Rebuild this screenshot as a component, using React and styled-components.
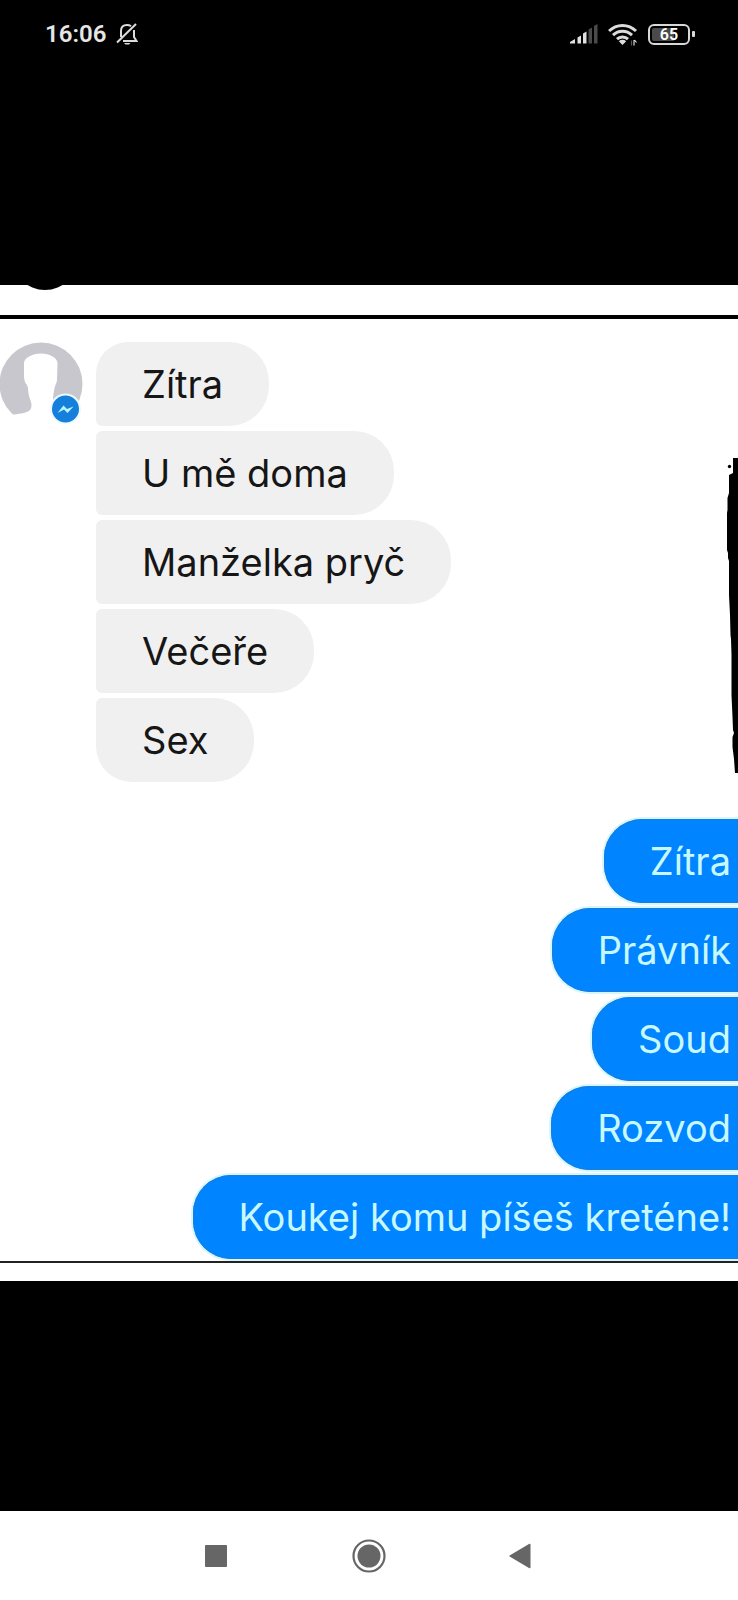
import styled, { createGlobalStyle } from "styled-components"

const GlobalStyle = createGlobalStyle`
    * {
        box-sizing: border-box;
    }

    body {
        margin: 0;
        background: #000;
    }
`
const Screen = styled.div`
    min-height: 100vh;
    display: flex;
    flex-direction: column;
    background: #000;
    overflow-x: hidden;
`
const StatusBar = styled.header`
    display: flex;
    align-items: center;
    justify-content: space-between;
    height: 55px;
    padding: 13px 43px 0 45px;
    color: #e6e6e6;
    font-family: Roboto, sans-serif;
`
const StatusGroup = styled.div`
    display: flex;
    align-items: center;
    gap: 10px;
`
const Clock = styled.time`
    font-size: 24px;
    line-height: 28px;
    font-weight: 600;
`
const Battery = styled.div`
    display: flex;
    align-items: center;
    gap: 2px;

    &::after {
        content: "";
        width: 3px;
        height: 6px;
        border-radius: 1px;
        background: #d8d8d8;
    }
`
const BatteryBody = styled.div`
    width: 42px;
    height: 21px;
    padding: 2px;
    border: 2px solid #d8d8d8;
    border-radius: 6px;
`
const BatteryLevel = styled.div`
    height: 100%;
    border-radius: 2px;
    background: linear-gradient(to right, #4a4a4a ${props => props.$level}%, transparent ${props => props.$level}%);
    color: #fff;
    font-size: 16px;
    line-height: 14px;
    font-weight: 600;
    text-align: center;
`
const Stage = styled.main`
    flex: 1;
    display: flex;
    flex-direction: column;
    justify-content: center;
`
const Photo = styled.section`
    position: relative;
    background: #fff;
    overflow: hidden;
`
const PhotoTop = styled.div`
    height: 34px;
    padding-left: 26px;
    border-bottom: 4px solid #000;

    & svg {
        display: block;
    }
`
const PhotoBottom = styled.div`
    height: 20px;
    border-top: 2px solid #222;
`
const Chat = styled.div`
    display: flex;
    flex-direction: column;
    gap: 37px;
    padding: 23px 0 2px;
`
const Incoming = styled.div`
    display: flex;
    align-items: flex-start;
    gap: 12px;

    & > svg {
        flex: none;
    }
`
const Messages = styled.ul`
    display: flex;
    flex-direction: column;
    align-items: ${props => props.$own ? "flex-end" : "flex-start"};
    gap: 5px;
    margin: 0;
    padding: 0;
    list-style: none;
`
const Bubble = styled.li`
    height: 84px;
    padding: 0 46px;
    border-radius: 6px 40px 40px 6px;
    background: #f1f0f0;
    color: #161616;
    font-family: Inter, "Liberation Sans", sans-serif;
    font-size: 38px;
    line-height: 84px;
    font-weight: 400;
    white-space: nowrap;

    &:first-child {
        border-top-left-radius: 32px;
    }

    &:last-child {
        border-bottom-left-radius: 36px;
    }
`
const OwnBubble = styled(Bubble)`
    padding-right: 7px;
    background: #0084ff;
    color: #c8f8ff;
    box-shadow: inset 0 0 0 1px #1c7cd6, 0 0 0 2px #d4f6ff;

    &, &:first-child, &:last-child {
        border-radius: 38px 0 0 38px;
    }
`
const Scribble = styled.svg`
    position: absolute;
    top: 170px;
    right: 0;
`
const NavBar = styled.nav`
    display: grid;
    grid-template-columns: repeat(3, 1fr);
    height: 89px;
    padding: 0 19%;
    background: #fff;
`
const NavButton = styled.button`
    display: flex;
    align-items: center;
    justify-content: center;
    padding: 0;
    border: none;
    background: transparent;
    color: #666;
`

const incoming = ["Zítra", "U mě doma", "Manželka pryč", "Večeře", "Sex"]
const outgoing = ["Zítra", "Právník", "Soud", "Rozvod", "Koukej komu píšeš kreténe!"]

const BellOff = () => (
    <svg width="22" height="22" viewBox="0 0 22 22" fill="none" stroke="#dcdcdc" strokeWidth="2">
        <path d="M5 14V8C5 4 7.500 2 11 2C12.500 2 14 2.400 15 3.200" />
        <path d="M18 7V14L20.500 18H7" />
        <path d="M1 19.500L20 1" />
        <path d="M8 20H14.500L13 21.500H9.500Z" fill="#dcdcdc" stroke="none" />
    </svg>
)

const Signal = () => (
    <svg width="28" height="20" viewBox="0 0 28 20">
        <path d="M0 19.500V18L5 15V19.500Z" fill="#e0e0e0" />
        <path d="M7.500 13.500L11 11.500V19.500H7.500Z" fill="#e0e0e0" />
        <path d="M13 9.500L16.500 7.500V19.500H13Z" fill="#e0e0e0" />
        <path d="M18.500 5.500L22 3.500V19.500H18.500Z" fill="#4a4a4a" />
        <path d="M24 2L27.500 0V19.500H24Z" fill="#4a4a4a" />
    </svg>
)

const Wifi = () => (
    <svg width="30" height="23" viewBox="0 0 30 23" fill="none" stroke="#dcdcdc" strokeWidth="3">
        <path d="M1 8C8.500 0.500 20.500 0.500 28 8" />
        <path d="M5 12.200C10.500 7 18.500 7 24 12.200" />
        <path d="M9 16.200C12 13.300 17 13.300 20 16.200" />
        <path d="M10.800 18.200C13 16.400 16 16.400 18.200 18.200L14.500 22Z" fill="#dcdcdc" stroke="none" />
        <path d="M26 17V22.500M26.500 17L28.500 19.500" strokeWidth="1.200" />
        <path d="M23.500 22.500V17.500" stroke="#555" strokeWidth="1.200" />
    </svg>
)

const Avatar = () => (
    <svg width="84" height="84" viewBox="0 0 84 84">
        <circle cx="41" cy="42" r="41.500" fill="#c8c7cd" />
        <path
            d="M24 21C24 16 32 11.500 41 11.500C50 11.500 57.500 16 57.500 21L57 38C57 41 55 43 54.500 46C54 50 53 53 53 57C53 62 60 65 84 68V84H0V76L14 72.500C21 71.500 27 71 30 68C33 64 31 60 29 54C28 50 28.500 46 27 43C25 41 24 38 24 34Z"
            fill="#fff"
        />
        <circle cx="65.500" cy="67" r="15.500" fill="#eefaff" />
        <circle cx="65.500" cy="67" r="13.500" fill="#1480dc" />
        <path d="M57.500 71L63.500 63.500L67 67L73.500 64.500L67.500 71L64 67.500Z" fill="#b8f5ff" />
    </svg>
)

const App = () => {
    return (
        <Screen>
            <GlobalStyle />
            <StatusBar>
                <StatusGroup>
                    <Clock>16:06</Clock>
                    <BellOff />
                </StatusGroup>
                <StatusGroup>
                    <Signal />
                    <Wifi />
                    <Battery>
                        <BatteryBody>
                            <BatteryLevel $level={65}>65</BatteryLevel>
                        </BatteryBody>
                    </Battery>
                </StatusGroup>
            </StatusBar>
            <Stage>
                <Photo>
                    <PhotoTop>
                        <svg width="38" height="5" viewBox="0 0 38 5">
                            <circle cx="19" cy="-28" r="33" />
                        </svg>
                    </PhotoTop>
                    <Chat>
                        <Incoming>
                            <Avatar />
                            <Messages>
                                {incoming.map(text => <Bubble key={text}>{text}</Bubble>)}
                            </Messages>
                        </Incoming>
                        <Messages $own>
                            {outgoing.map(text => <OwnBubble key={text}>{text}</OwnBubble>)}
                        </Messages>
                    </Chat>
                    <PhotoBottom />
                    <Scribble width="12" height="320" viewBox="0 0 12 320">
                        <path d="M12 3H7V18L3 20V38L1.500 43V55L1 58V95L2 98V103L3 106V140L4 160L4.500 180L5 184L5.500 200V240L6.500 262L7 275L8 278L6.500 282V292L8 304L9 318H12Z" />
                        <circle cx="3.500" cy="11.500" r="1.700" />
                    </Scribble>
                </Photo>
            </Stage>
            <NavBar>
                <NavButton aria-label="Recent apps">
                    <svg width="22" height="22" viewBox="0 0 22 22" fill="currentColor">
                        <rect width="22" height="22" rx="1" />
                    </svg>
                </NavButton>
                <NavButton aria-label="Home">
                    <svg width="34" height="34" viewBox="0 0 34 34">
                        <circle cx="17" cy="17" r="15.500" fill="none" stroke="currentColor" strokeWidth="2.200" />
                        <circle cx="17" cy="17" r="11.500" fill="currentColor" />
                    </svg>
                </NavButton>
                <NavButton aria-label="Back">
                    <svg width="26" height="26" viewBox="0 0 26 26" fill="currentColor">
                        <path d="M1 12.200L20 1C21 0.500 21.500 0.800 21.500 1.500V24.500C21.500 25.200 21 25.500 20 25L1 13.800C0 13.200 0 12.800 1 12.200Z" />
                    </svg>
                </NavButton>
            </NavBar>
        </Screen>
    )
}

export default App
